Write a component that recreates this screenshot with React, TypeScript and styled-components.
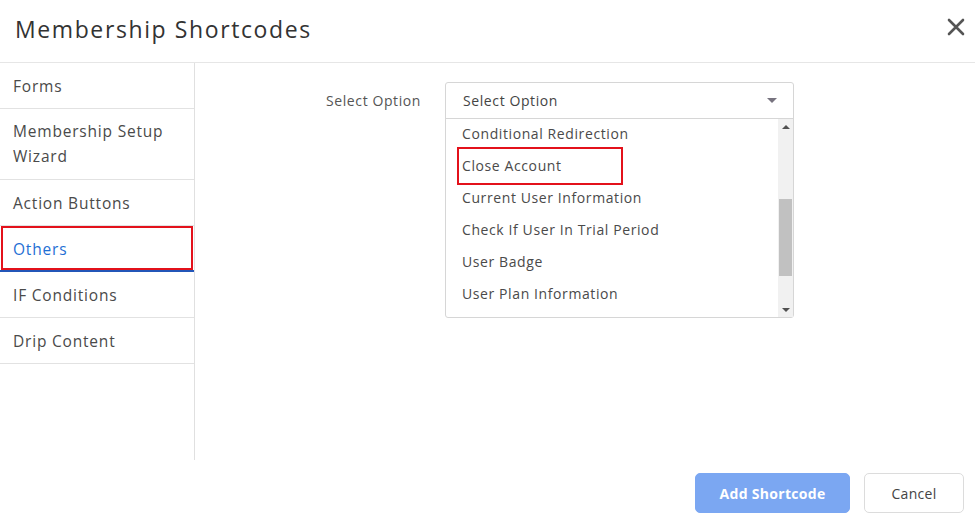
import React from 'react';
import styled, { createGlobalStyle } from 'styled-components';

const GlobalStyle = createGlobalStyle`
  html, body {
    margin: 0;
    padding: 0;
    background: #fff;
  }
  body {
    font-family: "Open Sans", "Noto Sans", sans-serif;
    color: #444;
  }
  * { box-sizing: border-box; }
`;

const Modal = styled.div`
  width: 975px;
  height: 520px;
  display: flex;
  flex-direction: column;
  background: #fff;
`;

const Header = styled.div`
  height: 63px;
  display: flex;
  align-items: center;
  justify-content: space-between;
  padding: 0 6px 4px 15px;
  border-bottom: 1px solid #e6e6e6;
`;

const Title = styled.h1`
  margin: 0;
  font-size: 23px;
  font-weight: 400;
  color: #333;
  letter-spacing: 1.6px;
`;

const CloseButton = styled.button`
  width: 26px;
  height: 26px;
  border: 0;
  background: none;
  padding: 0;
  cursor: pointer;
  display: flex;
  align-items: center;
  justify-content: center;
  margin-bottom: 4px;
`;

const Body = styled.div`
  height: 397px;
  display: flex;
`;

const Sidebar = styled.ul`
  width: 195px;
  margin: 0;
  padding: 0;
  list-style: none;
  border-right: 1px solid #e0e0e0;
`;

const Tab = styled.li<{ $active?: boolean; $tall?: boolean }>`
  position: relative;
  padding: ${p => (p.$tall ? '10px 13px 10px' : p.$active ? '12px 13px 10px' : '12px 13px 11px')};
  font-size: 15.5px;
  line-height: ${p => (p.$tall ? '25px' : '22px')};
  letter-spacing: 0.8px;
  color: ${p => (p.$active ? '#1f6fd4' : '#4a4a4a')};
  border-bottom: ${p => (p.$active ? '2px solid #2356b8' : '1px solid #e2e2e2')};
  cursor: pointer;
`;

const Highlight = styled.span<{ $inset?: string }>`
  position: absolute;
  inset: ${p => p.$inset || '0'};
  border: 2px solid #e3111b;
  pointer-events: none;
`;

const Content = styled.div`
  flex: 1;
  padding: 19px 0 0 131px;
  display: flex;
  align-items: flex-start;
`;

const Label = styled.label`
  width: 119px;
  font-size: 14px;
  color: #555;
  padding-top: 9px;
  letter-spacing: 0.6px;
`;

const SelectWrap = styled.div`
  width: 349px;
  border: 1px solid #d6d6d6;
  border-radius: 3px;
  background: #fff;
`;

const SelectHead = styled.div`
  height: 36px;
  display: flex;
  align-items: center;
  justify-content: space-between;
  padding: 0 16px 0 17px;
  font-size: 14px;
  color: #444;
  border-bottom: 1px solid #d6d6d6;
  letter-spacing: 0.6px;
`;

const Caret = styled.span`
  width: 0;
  height: 0;
  border-left: 5px solid transparent;
  border-right: 5px solid transparent;
  border-top: 5px solid #77737f;
`;

const ListArea = styled.div`
  height: 198px;
  display: flex;
`;

const Options = styled.ul`
  flex: 1;
  margin: 0;
  padding: 0;
  list-style: none;
`;

const Option = styled.li`
  position: relative;
  height: 32px;
  line-height: 30px;
  padding-left: 16px;
  font-size: 14px;
  color: #4a4a4a;
  letter-spacing: 0.6px;
`;

const Scrollbar = styled.div`
  width: 15px;
  background: #f1f1f1;
  display: flex;
  flex-direction: column;
  align-items: center;
`;

const ScrollArrow = styled.span<{ $down?: boolean }>`
  height: 15px;
  display: flex;
  align-items: center;
  justify-content: center;
  &::after {
    content: '';
    border-left: 4px solid transparent;
    border-right: 4px solid transparent;
    ${p => (p.$down ? 'border-top: 4px solid #505050;' : 'border-bottom: 4px solid #505050;')}
  }
`;

const ScrollTrack = styled.div`
  flex: 1;
  width: 100%;
  padding: 65px 1px 26px;
  display: flex;
`;

const Thumb = styled.div`
  flex: 1;
  background: #c1c1c1;
`;

const Footer = styled.div`
  flex: 1;
  display: flex;
  justify-content: flex-end;
  align-items: flex-start;
  gap: 14px;
  padding: 13px 11px 0 0;
`;

const Button = styled.button<{ $primary?: boolean }>`
  height: 40px;
  border-radius: 5px;
  font-family: inherit;
  font-size: 14px;
  letter-spacing: 0.3px;
  cursor: pointer;
  padding: 0;
  width: ${p => (p.$primary ? '155px' : '100px')};
  font-weight: ${p => (p.$primary ? 700 : 400)};
  color: ${p => (p.$primary ? '#fff' : '#444')};
  background: ${p => (p.$primary ? '#7ba7f2' : '#fff')};
  border: 1px solid ${p => (p.$primary ? '#7ba7f2' : '#dcdcdc')};
`;

const tabs = ['Forms', 'Membership Setup Wizard', 'Action Buttons', 'Others', 'IF Conditions', 'Drip Content'];

const options = [
  'Conditional Redirection',
  'Close Account',
  'Current User Information',
  'Check If User In Trial Period',
  'User Badge',
  'User Plan Information',
];

export default function App() {
  return (
    <Modal>
      <GlobalStyle />
      <Header>
        <Title>Membership Shortcodes</Title>
        <CloseButton aria-label="Close">
          <svg width="18" height="18" viewBox="0 0 18 18">
            <path d="M2 2 L16 16 M16 2 L2 16" stroke="#555" strokeWidth="2.6" strokeLinecap="round" />
          </svg>
        </CloseButton>
      </Header>
      <Body>
        <Sidebar>
          {tabs.map(t => (
            <Tab key={t} $active={t === 'Others'} $tall={t === 'Membership Setup Wizard'}>
              {t === 'Membership Setup Wizard' ? (
                <>
                  Membership Setup
                  <br />
                  Wizard
                </>
              ) : (
                t
              )}
              {t === 'Others' && <Highlight $inset="0 1px 0 1px" />}
            </Tab>
          ))}
        </Sidebar>
        <Content>
          <Label>Select Option</Label>
          <SelectWrap>
            <SelectHead>
              Select Option
              <Caret />
            </SelectHead>
            <ListArea>
              <Options>
                {options.map(o => (
                  <Option key={o}>
                    {o}
                    {o === 'Close Account' && <Highlight $inset="-4px auto -2px 11px" style={{ width: 166 }} />}
                  </Option>
                ))}
              </Options>
              <Scrollbar>
                <ScrollArrow />
                <ScrollTrack>
                  <Thumb />
                </ScrollTrack>
                <ScrollArrow $down />
              </Scrollbar>
            </ListArea>
          </SelectWrap>
        </Content>
      </Body>
      <Footer>
        <Button $primary>Add Shortcode</Button>
        <Button>Cancel</Button>
      </Footer>
    </Modal>
  );
}
